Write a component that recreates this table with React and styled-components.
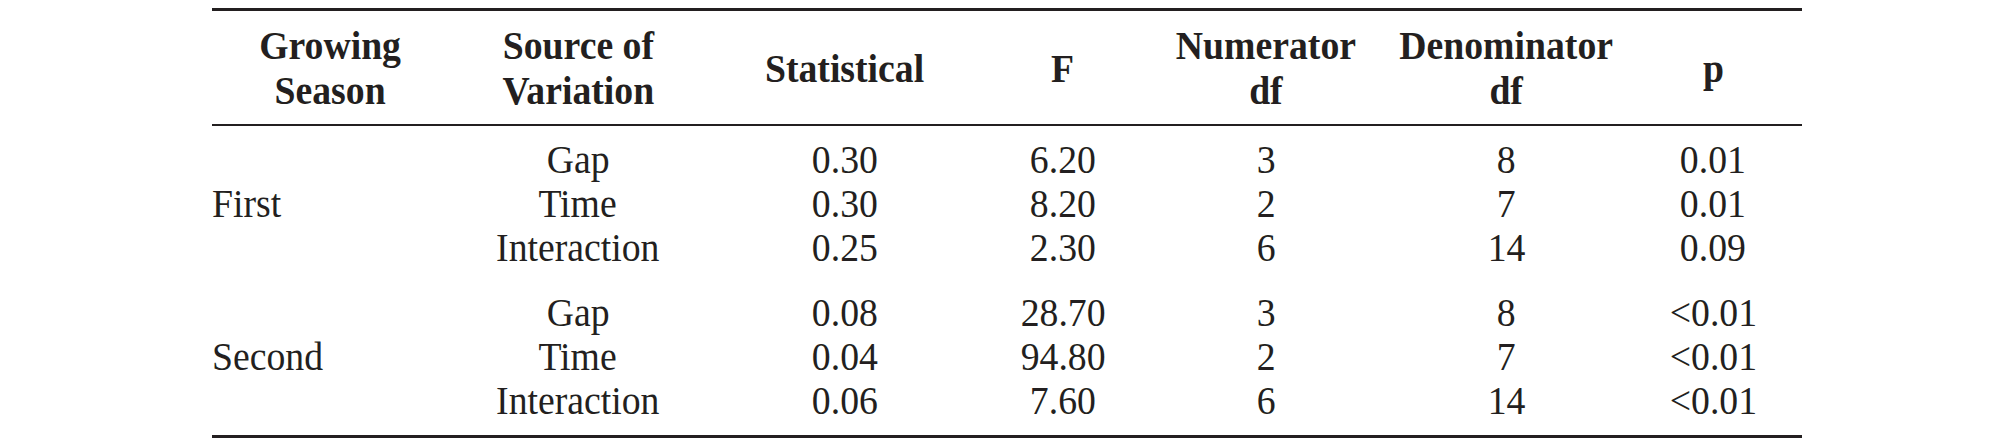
import React from "react";
import styled, { createGlobalStyle } from "styled-components";

const GlobalStyle = createGlobalStyle`
  html, body {
    margin: 0;
    padding: 0;
    background: #ffffff;
  }
  body {
    font-family: "Liberation Serif", "Times New Roman", serif;
    color: #231f20;
  }
`;

const Page = styled.div`
  width: 2009px;
  height: 445px;
  padding-top: 8px;
  box-sizing: border-box;
`;

const TableWrap = styled.div`
  margin-left: 212px;
  width: 1590px;
  border-top: 3px solid #231f20;
  border-bottom: 3px solid #231f20;
`;

const Table = styled.table`
  width: 100%;
  border-collapse: separate;
  border-spacing: 0;
  table-layout: fixed;
  font-size: 41px;
`;

const HeadCell = styled.th`
  font-weight: bold;
  line-height: 45px;
  padding: 12px 0 11px;
  text-align: center;
  vertical-align: middle;
  border-bottom: 2px solid #231f20;
`;

const Cell = styled.td`
  line-height: 44px;
  padding: ${(p) => (p.$first ? "11px" : "0")} 0
    ${(p) => (p.$last ? (p.$end ? "13px" : "10px") : "0")};
  text-align: ${(p) => p.$align || "center"};
  vertical-align: middle;
  white-space: nowrap;
`;

// the printed face is a touch narrower than Liberation Serif
const Narrow = styled.span`
  display: inline-block;
  transform: scaleX(0.92);
  transform-origin: ${(p) => (p.$left ? "left" : "center")} center;
`;

const widths = [236, 260, 274, 162, 244, 236, 178];

const headers = [
  ["Growing", "Season"],
  ["Source of", "Variation"],
  ["Statistical"],
  ["F"],
  ["Numerator", "df"],
  ["Denominator", "df"],
  ["p"],
];

const groups = [
  {
    season: "First",
    rows: [
      ["Gap", "0.30", "6.20", "3", "8", "0.01"],
      ["Time", "0.30", "8.20", "2", "7", "0.01"],
      ["Interaction", "0.25", "2.30", "6", "14", "0.09"],
    ],
  },
  {
    season: "Second",
    rows: [
      ["Gap", "0.08", "28.70", "3", "8", "<0.01"],
      ["Time", "0.04", "94.80", "2", "7", "<0.01"],
      ["Interaction", "0.06", "7.60", "6", "14", "<0.01"],
    ],
  },
];

export default function App() {
  return (
    <Page>
      <GlobalStyle />
      <TableWrap>
        <Table>
          <colgroup>
            {widths.map((w, i) => (
              <col key={i} style={{ width: w }} />
            ))}
          </colgroup>
          <thead>
            <tr>
              {headers.map((h, i) => (
                <HeadCell key={i}>
                  <Narrow>
                    {h.map((line, j) => (
                      <React.Fragment key={j}>
                        {j > 0 && <br />}
                        {line}
                      </React.Fragment>
                    ))}
                  </Narrow>
                </HeadCell>
              ))}
            </tr>
          </thead>
          <tbody>
            {groups.map((g, gi) =>
              g.rows.map((row, ri) => {
                const first = ri === 0;
                const last = ri === g.rows.length - 1;
                const end = gi === groups.length - 1;
                return (
                  <tr key={`${gi}-${ri}`}>
                    {first && (
                      <Cell
                        rowSpan={g.rows.length}
                        $align="left"
                        $first
                        $last
                        $end={end}
                      >
                        <Narrow $left>{g.season}</Narrow>
                      </Cell>
                    )}
                    {row.map((v, ci) => (
                      <Cell key={ci} $first={first} $last={last} $end={end}>
                        <Narrow>{v}</Narrow>
                      </Cell>
                    ))}
                  </tr>
                );
              })
            )}
          </tbody>
        </Table>
      </TableWrap>
    </Page>
  );
}
